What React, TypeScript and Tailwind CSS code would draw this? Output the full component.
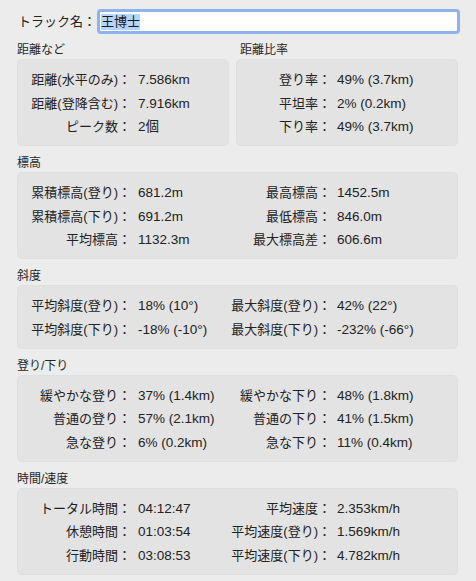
import React from "react";

type Row = [string, string, string?, string?];

const FONT = "font-['Liberation_Sans','Noto_Sans_CJK_JP',sans-serif]";

function SectionLabel({ children, className = "" }: { children: React.ReactNode; className?: string }) {
  return (
    <div className={`text-[12px] leading-[16px] text-[#262626] mb-[1px] ${className}`}>{children}</div>
  );
}

function FullBox({ rows }: { rows: Row[] }) {
  return (
    <div className="rounded-[5px] bg-[#e3e3e3] border border-[#dfdfdf] pt-[12px] pb-[10px] grid grid-cols-[113px_85px_115px_1fr] gap-y-[7.5px] text-[13px] leading-[16px] text-[#222222]">
      {rows.map((r, i) => (
        <React.Fragment key={i}>
          <div className="text-right whitespace-nowrap">{r[0]}：</div>
          <div className="pl-[7px] whitespace-nowrap text-[13.5px]">{r[1]}</div>
          <div className="text-right whitespace-nowrap">{r[2]}：</div>
          <div className="pl-[6px] whitespace-nowrap text-[13.5px]">{r[3]}</div>
        </React.Fragment>
      ))}
    </div>
  );
}

function HalfBox({ rows, labelW, className = "" }: { rows: [string, string][]; labelW: "a" | "b"; className?: string }) {
  return (
    <div
      className={`rounded-[5px] bg-[#e3e3e3] border border-[#dfdfdf] pt-[12px] pb-[10px] grid gap-y-[7.5px] text-[13px] leading-[16px] text-[#222222] ${
        labelW === "a" ? "grid-cols-[113px_1fr]" : "grid-cols-[94px_1fr]"
      } ${className}`}
    >
      {rows.map((r, i) => (
        <React.Fragment key={i}>
          <div className="text-right whitespace-nowrap">{r[0]}：</div>
          <div className={`${labelW === "a" ? "pl-[7px]" : "pl-[6px]"} whitespace-nowrap text-[13.5px]`}>{r[1]}</div>
        </React.Fragment>
      ))}
    </div>
  );
}

export default function App() {
  return (
    <div className={`min-h-screen w-full bg-[#ececec] ${FONT} text-[#222222] pl-[17px] pr-[18px] pt-[9px] pb-[8px]`}>
      {/* title row */}
      <div className="flex items-center h-[25px]">
        <div className="pl-[1px] text-[13px] leading-[16px] whitespace-nowrap w-[79px]">トラック名：</div>
        <div className="flex-1 ml-[1px] -mr-[2px] h-[25px] rounded-[4px] border-[3px] border-[#8db3ec] bg-white flex items-center pl-[1px]">
          <span className="bg-[#b4d5fe] text-[13px] leading-[16px] text-[#1a1a1a]">王博士</span>
        </div>
      </div>

      {/* distance */}
      <div className="mt-[8px] flex gap-[7px]">
        <div className="w-[212px]">
          <SectionLabel>距離など</SectionLabel>
          <HalfBox
            labelW="a"
            rows={[
              ["距離(水平のみ)", "7.586km"],
              ["距離(登降含む)", "7.916km"],
              ["ピーク数", "2個"],
            ]}
          />
        </div>
        <div className="flex-1">
          <SectionLabel className="pl-[4px]">距離比率</SectionLabel>
          <HalfBox
            labelW="b"
            rows={[
              ["登り率", "49% (3.7km)"],
              ["平坦率", "2% (0.2km)"],
              ["下り率", "49% (3.7km)"],
            ]}
          />
        </div>
      </div>

      <div className="mt-[9px]">
        <SectionLabel>標高</SectionLabel>
        <FullBox
          rows={[
            ["累積標高(登り)", "681.2m", "最高標高", "1452.5m"],
            ["累積標高(下り)", "691.2m", "最低標高", "846.0m"],
            ["平均標高", "1132.3m", "最大標高差", "606.6m"],
          ]}
        />
      </div>

      <div className="mt-[9px]">
        <SectionLabel>斜度</SectionLabel>
        <FullBox
          rows={[
            ["平均斜度(登り)", "18% (10°)", "最大斜度(登り)", "42% (22°)"],
            ["平均斜度(下り)", "-18% (-10°)", "最大斜度(下り)", "-232% (-66°)"],
          ]}
        />
      </div>

      <div className="mt-[9px]">
        <SectionLabel>登り/下り</SectionLabel>
        <FullBox
          rows={[
            ["緩やかな登り", "37% (1.4km)", "緩やかな下り", "48% (1.8km)"],
            ["普通の登り", "57% (2.1km)", "普通の下り", "41% (1.5km)"],
            ["急な登り", "6% (0.2km)", "急な下り", "11% (0.4km)"],
          ]}
        />
      </div>

      <div className="mt-[9px]">
        <SectionLabel>時間/速度</SectionLabel>
        <FullBox
          rows={[
            ["トータル時間", "04:12:47", "平均速度", "2.353km/h"],
            ["休憩時間", "01:03:54", "平均速度(登り)", "1.569km/h"],
            ["行動時間", "03:08:53", "平均速度(下り)", "4.782km/h"],
          ]}
        />
      </div>
    </div>
  );
}
